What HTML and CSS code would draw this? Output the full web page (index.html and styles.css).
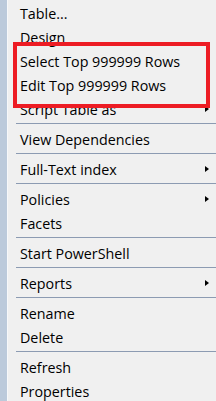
FILE: index.html
```html
<!DOCTYPE html>
<html>
<head>
<meta charset="utf-8">
<link rel="stylesheet" href="styles.css">
</head>
<body>
<div class="menu">
  <div class="strip"></div>
  <div class="items">
    <div class="item">Table...</div>
    <div class="item">Design</div>
    <div class="item">Select Top 999999 Rows</div>
    <div class="item">Edit Top 999999 Rows</div>
    <div class="item sub">Script Table as</div>
    <div class="sep"></div>
    <div class="item">View Dependencies</div>
    <div class="sep"></div>
    <div class="item sub">Full-Text index</div>
    <div class="sep"></div>
    <div class="item sub">Policies</div>
    <div class="item">Facets</div>
    <div class="sep"></div>
    <div class="item">Start PowerShell</div>
    <div class="sep"></div>
    <div class="item sub">Reports</div>
    <div class="sep"></div>
    <div class="item">Rename</div>
    <div class="item">Delete</div>
    <div class="sep"></div>
    <div class="item">Refresh</div>
    <div class="item">Properties</div>
  </div>
  <div class="highlight"></div>
</div>
</body>
</html>
```
FILE: styles.css
```css
html, body {
  margin: 0;
  padding: 0;
  background: #f0f0f0;
  overflow: hidden;
}
.menu {
  position: relative;
  width: 216px;
  height: 401px;
  display: flex;
  background: #f0f0f0;
  font-family: "Open Sans", "Noto Sans", sans-serif;
  font-size: 14.3px;
  color: #000;
}
.strip {
  width: 7px;
  flex: none;
  background: #bccadb;
  border-right: 1px solid #f7f8fa;
}
.items {
  flex: 1;
  padding-top: 1px;
}
.item {
  height: 24px;
  line-height: 25px;
  padding-left: 12px;
  position: relative;
  white-space: nowrap;
}
.item.sub::after {
  content: "";
  position: absolute;
  right: 7px;
  top: 9px;
  border-left: 4px solid #000;
  border-top: 3.5px solid transparent;
  border-bottom: 3.5px solid transparent;
}
.sep {
  height: 6px;
  margin-left: 8px;
  position: relative;
}
.sep::before {
  content: "";
  position: absolute;
  left: 0;
  right: 0;
  top: 2px;
  height: 1px;
  background: #8c9bb2;
}
.highlight {
  position: absolute;
  left: 13px;
  top: 42px;
  width: 189px;
  height: 58px;
  border: 4px solid #ed1c24;
}
```
